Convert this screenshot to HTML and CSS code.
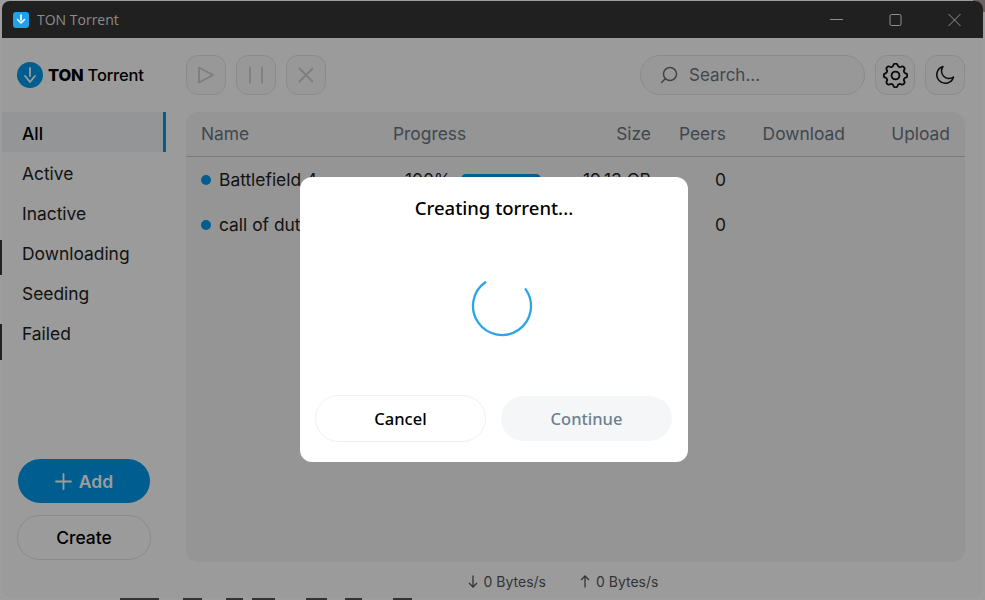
FILE: index.html
```html
<!DOCTYPE html>
<html lang="en">
<head>
    <meta charset="UTF-8">
    <meta name="viewport" content="width=device-width, initial-scale=1.0">
    <title>TON Torrent</title>
    <link rel="stylesheet" href="styles.css">
</head>
<body>
    <div class="backdrop"></div>
    <div class="window">
        <div class="titlebar">
            <div class="app-icon">
                <svg width="10" height="11" viewBox="0 0 10 11" fill="none" stroke="#fff" stroke-width="1.6" stroke-linecap="round" stroke-linejoin="round"><path d="M5 1v5"/><path d="M1.5 5.500 5 9l3.500-3.500"/></svg>
            </div>
            <span class="app-name">TON Torrent</span>
            <div class="win-controls">
                <svg width="13" height="14" viewBox="0 0 13 14" fill="none" stroke="#8f8f8f"><path d="M0 6.500h13"/></svg>
                <svg width="13" height="14" viewBox="0 0 13 14" fill="none" stroke="#8f8f8f"><rect x="1" y="1.500" width="11" height="11" rx="1.500"/></svg>
                <svg width="13" height="14" viewBox="0 0 13 14" fill="none" stroke="#8f8f8f"><path d="M.5 1l12 12M12.500 1 .5 13"/></svg>
            </div>
        </div>

        <div class="app">
            <header class="toolbar">
                <div class="logo">
                    <div class="logo-mark">
                        <svg width="14" height="17" viewBox="0 0 14 17" fill="none" stroke="#fff" stroke-width="1.8" stroke-linecap="round" stroke-linejoin="round"><path d="M7 1v8"/><path d="M2 9 7 15l5-6"/></svg>
                    </div>
                    <span class="logo-text"><b>TON</b> Torrent</span>
                </div>
                <div class="tool-group">
                    <button class="icon-btn">
                        <svg width="20" height="20" viewBox="0 0 20 20" fill="none" stroke="#c9ccd0" stroke-width="1.8" stroke-linejoin="round"><path d="M3 2.500v15l14-7.500z"/></svg>
                    </button>
                    <button class="icon-btn">
                        <svg width="20" height="20" viewBox="0 0 20 20" fill="none" stroke="#c9ccd0" stroke-width="1.8" stroke-linecap="round"><path d="M4 2.500v15M16 2.500v15"/></svg>
                    </button>
                    <button class="icon-btn">
                        <svg width="20" height="20" viewBox="0 0 20 20" fill="none" stroke="#c9ccd0" stroke-width="1.8" stroke-linecap="round"><path d="M3.500 3.500l13 13M16.500 3.500l-13 13"/></svg>
                    </button>
                </div>
                <div class="search">
                    <svg width="20" height="20" viewBox="0 0 20 20" fill="none" stroke="#6b7075" stroke-width="1.5" stroke-linecap="round"><circle cx="11" cy="9" r="6.500"/><path d="M6.300 13.700 2.500 17.500"/></svg>
                    <span>Search...</span>
                </div>
                <button class="icon-btn">
                    <svg width="25" height="25" viewBox="2.500 2.500 19 19" fill="none" stroke="#111" stroke-width="1.400" stroke-linecap="round" stroke-linejoin="round"><circle cx="12" cy="12" r="3"/><path d="M10.325 4.317c.426-1.756 2.924-1.756 3.350 0a1.724 1.724 0 0 0 2.573 1.066c1.543-.94 3.310.826 2.370 2.370a1.724 1.724 0 0 0 1.065 2.572c1.756.426 1.756 2.924 0 3.350a1.724 1.724 0 0 0-1.066 2.573c.94 1.543-.826 3.310-2.370 2.370a1.724 1.724 0 0 0-2.572 1.065c-.426 1.756-2.924 1.756-3.350 0a1.724 1.724 0 0 0-2.573-1.066c-1.543.94-3.310-.826-2.370-2.370a1.724 1.724 0 0 0-1.065-2.572c-1.756-.426-1.756-2.924 0-3.350a1.724 1.724 0 0 0 1.066-2.573c-.94-1.543.826-3.310 2.370-2.370.996.608 2.296.07 2.572-1.065z"/></svg>
                </button>
                <button class="icon-btn">
                    <svg width="20" height="20" viewBox="0 0 20 20" fill="none" stroke="#111" stroke-width="1.5" stroke-linejoin="round"><path d="M8 1.500a8.500 8.500 0 1 0 10.500 10.500A7.500 7.500 0 0 1 8 1.500z"/></svg>
                </button>
            </header>

            <div class="main">
                <aside class="sidebar">
                    <nav class="filters">
                        <a class="filter active">All</a>
                        <a class="filter">Active</a>
                        <a class="filter">Inactive</a>
                        <a class="filter">Downloading</a>
                        <a class="filter">Seeding</a>
                        <a class="filter">Failed</a>
                    </nav>
                    <div class="side-actions">
                        <button class="btn-add">
                            <svg width="17" height="17" viewBox="0 0 17 17" fill="none" stroke="#fff" stroke-width="1.800" stroke-linecap="round"><path d="M8.500 1v15M1 8.500h15"/></svg>
                            Add
                        </button>
                        <button class="btn-create">Create</button>
                    </div>
                </aside>

                <section class="panel">
                    <div class="row head">
                        <span class="c-name">Name</span>
                        <span class="c-progress">Progress</span>
                        <span class="c-size">Size</span>
                        <span class="c-peers">Peers</span>
                        <span class="c-down">Download</span>
                        <span class="c-up">Upload</span>
                    </div>
                    <div class="row item">
                        <span class="c-name"><i class="dot"></i>Battlefield 4</span>
                        <span class="c-progress"><span class="pct">100%</span><span class="bar"></span></span>
                        <span class="c-size">19.13 GB</span>
                        <span class="c-peers">0</span>
                        <span class="c-down"></span>
                        <span class="c-up"></span>
                    </div>
                    <div class="row item">
                        <span class="c-name"><i class="dot"></i>call of duty</span>
                        <span class="c-progress"></span>
                        <span class="c-size"></span>
                        <span class="c-peers">0</span>
                        <span class="c-down"></span>
                        <span class="c-up"></span>
                    </div>
                </section>
            </div>

            <footer class="statusbar">
                <span class="rate">
                    <svg width="10" height="13" viewBox="0 0 10 13" fill="none" stroke="#555" stroke-width="1.300"><path d="M5 .5v11.500M1 8l4 4 4-4"/></svg>
                    0 Bytes/s
                </span>
                <span class="rate">
                    <svg width="10" height="13" viewBox="0 0 10 13" fill="none" stroke="#555" stroke-width="1.300"><path d="M5 12.500V1M1 5l4-4 4 4"/></svg>
                    0 Bytes/s
                </span>
            </footer>

            <div class="overlay">
                <div class="dialog">
                    <h2>Creating torrent...</h2>
                    <div class="spinner">
                        <svg width="64" height="64" viewBox="0 0 64 64" fill="none" stroke="#2ba5e8" stroke-width="2.300" stroke-linecap="round"><path d="M15.300 8.300A29 29 0 1 0 55.700 15.300"/></svg>
                    </div>
                    <div class="dialog-actions">
                        <button class="btn-cancel">Cancel</button>
                        <button class="btn-continue">Continue</button>
                    </div>
                </div>
            </div>
        </div>
    </div>
</body>
</html>
```

FILE: styles.css
```css
* {
    box-sizing: border-box;
}

html, body {
    height: 100%;
}

body {
    margin: 0;
    font-family: Inter, Arial, sans-serif;
    background: #9d9d9d;
    overflow: hidden;
}

button {
    font-family: inherit;
    padding: 0;
}

/* bits of other windows showing round the edge */
.backdrop {
    position: absolute;
    inset: 0;
    background-repeat: no-repeat;
    background-image:
        linear-gradient(#333, #333), linear-gradient(#333, #333),
        linear-gradient(#333, #333), linear-gradient(#333, #333),
        linear-gradient(#333, #333), linear-gradient(#333, #333),
        linear-gradient(#333, #333), linear-gradient(#222, #222),
        linear-gradient(#222, #222), linear-gradient(#6d6060, #6d6060);
    background-size:
        39px 2px, 19px 2px, 17px 2px, 23px 2px, 21px 2px, 17px 2px, 19px 2px,
        2px 35px, 2px 36px, 12px 12px;
    background-position:
        120px 598px, 183px 598px, 226px 598px, 252px 598px, 306px 598px, 345px 598px, 393px 598px,
        0 240px, 0 324px, 973px 0;
}

.window {
    position: relative;
    height: 597px;
    width: 981px;
    margin: 1px 0 0 2px;
    border-radius: 8px 8px 6px 6px;
    overflow: hidden;
    display: flex;
    flex-direction: column;
}

.titlebar {
    height: 37px;
    flex: none;
    background: #202020;
    display: flex;
    align-items: center;
    padding-left: 11px;
}

.app-icon {
    width: 16px;
    height: 16px;
    border-radius: 3px;
    background: #1fa2ea;
    display: flex;
    align-items: center;
    justify-content: center;
}

.app-name {
    margin-left: 8px;
    font-family: "Open Sans", Arial, sans-serif;
    font-size: 14px;
    color: #8c8c8c;
}

.win-controls {
    margin-left: auto;
    display: flex;
    gap: 46px;
    padding-right: 22px;
}

.app {
    flex: 1;
    position: relative;
    background: #fefefe;
    display: flex;
    flex-direction: column;
}

.toolbar {
    height: 74px;
    flex: none;
    padding: 17px 18px 0 15px;
    display: flex;
    align-items: flex-start;
    gap: 10px;
}

.logo {
    width: 159px;
    height: 40px;
    padding-top: 7px;
    display: flex;
    gap: 5px;
    align-items: flex-start;
}

.logo-mark {
    width: 26px;
    height: 26px;
    border-radius: 50%;
    background: #0098ea;
    display: flex;
    align-items: center;
    justify-content: center;
}

.logo-text {
    font-size: 16.500px;
    line-height: 26px;
    font-weight: 500;
    letter-spacing: -0.2px;
    color: #000;
    white-space: nowrap;
}

.logo-text b {
    font-weight: 800;
}

.tool-group {
    display: flex;
    gap: 10px;
}

.icon-btn {
    width: 40px;
    height: 40px;
    border: 1px solid #e2e3e5;
    border-radius: 12px;
    background: #f9f9fa;
    display: flex;
    align-items: center;
    justify-content: center;
}

.search {
    width: 225px;
    height: 40px;
    margin-left: auto;
    padding-left: 18px;
    border: 1px solid #e2e3e5;
    border-radius: 20px;
    background: #f9f9fa;
    display: flex;
    align-items: center;
    gap: 10px;
    font-size: 17px;
    color: #6b7580;
}

.main {
    flex: 1;
    display: flex;
    min-height: 0;
}

.sidebar {
    width: 184px;
    flex: none;
    display: flex;
    flex-direction: column;
    justify-content: space-between;
    padding-bottom: 4px;
}

.filters {
    display: flex;
    flex-direction: column;
}

.filter {
    height: 40px;
    width: 164px;
    padding-left: 20px;
    font-size: 17.400px;
    line-height: 44px;
    color: #222;
}

.filter.active {
    color: #000;
    font-weight: 500;
    background: #f2f3f5;
    border-right: 3px solid #0098ea;
}

.side-actions {
    padding-left: 15px;
    display: flex;
    flex-direction: column;
    gap: 12px;
}

.btn-add, .btn-create {
    border-radius: 22px;
    font-size: 17.500px;
    font-weight: 500;
}

.btn-add {
    height: 44px;
    margin-left: 1px;
    width: 132px;
    border: none;
    background: #0098ea;
    color: #fff;
    font-weight: 600;
    display: flex;
    align-items: center;
    justify-content: center;
    gap: 7px;
}

.btn-create {
    height: 45px;
    width: 134px;
    border: 1px solid #e2e3e5;
    background: #fefefe;
    color: #000;
}

.panel {
    width: 779px;
    height: 450px;
    background: #f3f4f6;
    border-radius: 12px;
    font-size: 17.400px;
}

.row {
    display: flex;
    align-items: center;
    padding: 0 15px;
    white-space: nowrap;
}

.row.head {
    height: 45px;
    padding-bottom: 2px;
    color: #6b7580;
    border-bottom: 1px solid #c4c8cc;
}

.row.item {
    height: 45px;
    color: #222;
}

.c-name {
    width: 192px;
    display: flex;
    align-items: center;
}

.c-progress {
    width: 150px;
    display: flex;
    align-items: center;
    gap: 10px;
}

.c-size {
    width: 108px;
    text-align: right;
}

.c-peers {
    width: 75px;
    text-align: right;
}

.c-down {
    width: 119px;
    text-align: right;
}

.c-up {
    width: 105px;
    text-align: right;
}

.pct {
    margin-left: 12px;
}

.bar {
    width: 80px;
    height: 10px;
    margin-top: -2px;
    border-radius: 5px;
    background: #0098ea;
}

.dot {
    width: 10px;
    height: 10px;
    border-radius: 50%;
    background: #0098ea;
    margin-right: 8px;
}

.statusbar {
    height: 34px;
    flex: none;
    padding-left: 141px;
    display: flex;
    align-items: center;
    justify-content: center;
    gap: 34px;
    font-size: 14px;
    color: #555;
}

.rate {
    display: flex;
    align-items: center;
    gap: 6px;
}

.overlay {
    position: absolute;
    inset: 0;
    background: rgba(0, 0, 0, 0.39);
}

.dialog {
    position: absolute;
    left: 298px;
    top: 139px;
    width: 388px;
    height: 285px;
    background: #fff;
    border-radius: 12px;
    padding: 19px 15px 20px;
    display: flex;
    flex-direction: column;
    align-items: center;
}

.dialog h2 {
    margin: 0;
    font-family: "Noto Sans", Arial, sans-serif;
    font-size: 18.500px;
    line-height: 24px;
    font-weight: 500;
    color: #000;
}

.spinner {
    margin-top: 54px;
    height: 64px;
    margin-left: 16px;
}

.dialog-actions {
    margin-top: auto;
    width: 100%;
    display: flex;
    align-items: center;
    gap: 15px;
}

.btn-cancel, .btn-continue {
    width: 171px;
    font-family: "Noto Sans", Arial, sans-serif;
    border-radius: 24px;
    font-size: 16.500px;
    font-weight: 500;
}

.btn-cancel {
    height: 47px;
    border: 1px solid #eef0f2;
    background: #fff;
    color: #000;
}

.btn-continue {
    height: 45px;
    border: none;
    background: #f4f6f8;
    color: #6f7f8e;
}
```
